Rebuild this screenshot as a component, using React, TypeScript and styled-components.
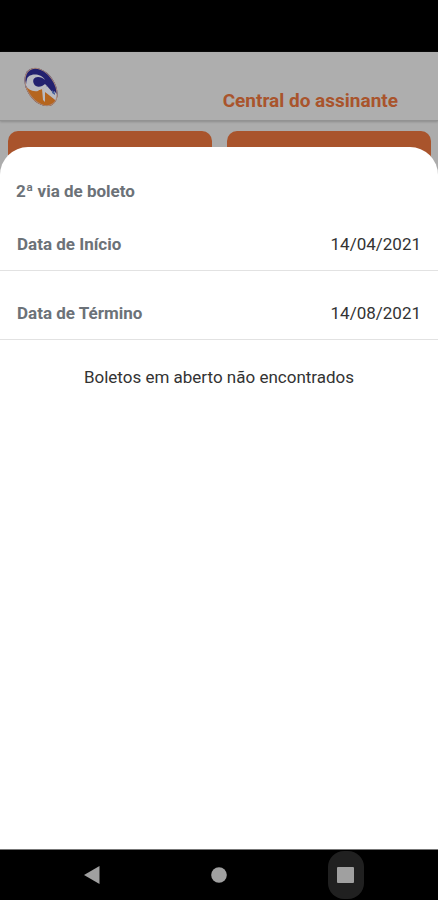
import React from "react";
import styled, { createGlobalStyle } from "styled-components";

const GlobalStyle = createGlobalStyle`
  * { box-sizing: border-box; }
  body {
    margin: 0;
    background: #acacac;
    font-family: Roboto, "Liberation Sans", sans-serif;
  }
`;

const Screen = styled.div`
  display: flex;
  flex-direction: column;
  min-height: 100vh;
`;

const StatusBar = styled.div`
  height: 52px;
  background: #000;
`;

const Header = styled.header`
  display: flex;
  align-items: flex-start;
  justify-content: space-between;
  height: 69px;
  padding: 14px 40px 0 22px;
  background: #aeaeae;
  border-bottom: 1px solid #929292;
  box-shadow: 0 1px 2px #8c8c8c;
`;

const Title = styled.h1`
  margin: 24px 0 0;
  font-size: 19px;
  line-height: 22px;
  font-weight: 700;
  color: #a9542c;
`;

const Tiles = styled.div`
  display: grid;
  grid-template-columns: 1fr 1fr;
  gap: 15px;
  padding: 10px 7px 0 8px;
`;

const Tile = styled.div`
  height: 56px;
  border-radius: 10px;
  background: #a9542c;
`;

const Sheet = styled.main`
  position: relative;
  flex: 1;
  margin-top: -40px;
  padding-top: 32px;
  background: #fff;
  border-radius: 28px 28px 0 0;
`;

const SheetTitle = styled.h2`
  margin: 0 0 17px;
  padding: 0 16px;
  font-size: 17px;
  line-height: 24px;
  font-weight: 700;
  color: #6c7278;
`;

const Field = styled.div`
  display: flex;
  align-items: flex-start;
  justify-content: space-between;
  height: 51px;
  margin-bottom: 18px;
  padding: 12px 17px 0;
  border-bottom: 1px solid #e2e2e2;
`;

const Label = styled.span`
  font-size: 17px;
  line-height: 24px;
  font-weight: 700;
  color: #6c7278;
`;

const DateButton = styled.button`
  padding: 0;
  border: 0;
  background: none;
  font: inherit;
  font-size: 17px;
  line-height: 24px;
  color: #333;
  cursor: pointer;
`;

const Message = styled.p`
  margin: 25px 16px 0;
  font-size: 17px;
  line-height: 24px;
  text-align: center;
  color: #333;
`;

const NavBar = styled.nav`
  display: grid;
  grid-template-columns: repeat(3, 1fr);
  align-items: center;
  justify-items: center;
  height: 51px;
  padding: 0 29px;
  border-top: 1px solid #777;
  background: #000;
`;

const NavButton = styled.button<{ $active?: boolean }>`
  display: flex;
  align-items: center;
  justify-content: center;
  width: 36px;
  height: 48px;
  padding: 0;
  border: 0;
  border-radius: 16px;
  background: ${(p) => (p.$active ? "#202020" : "transparent")};
  cursor: pointer;
`;

function Logo() {
  return (
    <svg width="38" height="42" viewBox="0 0 38 42" role="img" aria-label="CN">
      <defs>
        <clipPath id="oval">
          <ellipse cx="19" cy="21" rx="14" ry="21" transform="rotate(-34 19 21)" />
        </clipPath>
      </defs>
      <g clipPath="url(#oval)">
        <rect width="38" height="42" fill="#23216f" />
        <path d="M0 20 L8 22 L22 21 L38 31 V42 H0 Z" fill="#b5651f" />
        <path
          d="M23 14 C19 7 7 7 5 13 C3 19 6 24 12 24 C17 25 22 23 25 20 L23 18 C20 21 14 22 12 18 C10 14 12 11 16 11 C19 11 21 12 23 14 Z"
          fill="#b9bac1"
        />
        <path d="M4 15 C5 22 10 24 18 23 L16 25 C10 26 5 23 3 18 Z" fill="#b9bac1" />
        <path d="M20 23 L25 20 L32 28 V25 L35 28 V36 L32 33 L23 26 V36 L21 34 Z" fill="#b9bac1" />
        <path d="M23 27 L33 36 L31 41 L23 38 Z" fill="#b5651f" />
        <path d="M30 24 L33 27 V29 L30 27 Z" fill="#47609c" />
      </g>
      <ellipse
        cx="19"
        cy="21"
        rx="13.5"
        ry="20.5"
        transform="rotate(-34 19 21)"
        fill="none"
        stroke="#a98778"
        strokeWidth="1"
      />
    </svg>
  );
}

const fields = [
  { id: "inicio", label: "Data de Início", value: "14/04/2021" },
  { id: "termino", label: "Data de Término", value: "14/08/2021" },
];

export default function App() {
  return (
    <>
      <GlobalStyle />
      <Screen>
        <StatusBar />
        <Header>
          <Logo />
          <Title>Central do assinante</Title>
        </Header>
        <Tiles>
          <Tile />
          <Tile />
        </Tiles>
        <Sheet>
          <SheetTitle>2ª via de boleto</SheetTitle>
          {fields.map((f) => (
            <Field key={f.id}>
              <Label id={f.id}>{f.label}</Label>
              <DateButton type="button" aria-describedby={f.id}>
                {f.value}
              </DateButton>
            </Field>
          ))}
          <Message>Boletos em aberto não encontrados</Message>
        </Sheet>
        <NavBar>
          <NavButton type="button" aria-label="Voltar">
            <svg width="16" height="18" viewBox="0 0 16 18">
              <path d="M0 9 L15.5 0 V18 Z" fill="#a0a0a0" />
            </svg>
          </NavButton>
          <NavButton type="button" aria-label="Início">
            <svg width="16" height="16" viewBox="0 0 16 16">
              <circle cx="8" cy="8" r="7.8" fill="#a0a0a0" />
            </svg>
          </NavButton>
          <NavButton type="button" aria-label="Recentes" $active>
            <svg width="17" height="16" viewBox="0 0 17 16">
              <rect width="17" height="16" rx="1" fill="#a0a0a0" />
            </svg>
          </NavButton>
        </NavBar>
      </Screen>
    </>
  );
}
